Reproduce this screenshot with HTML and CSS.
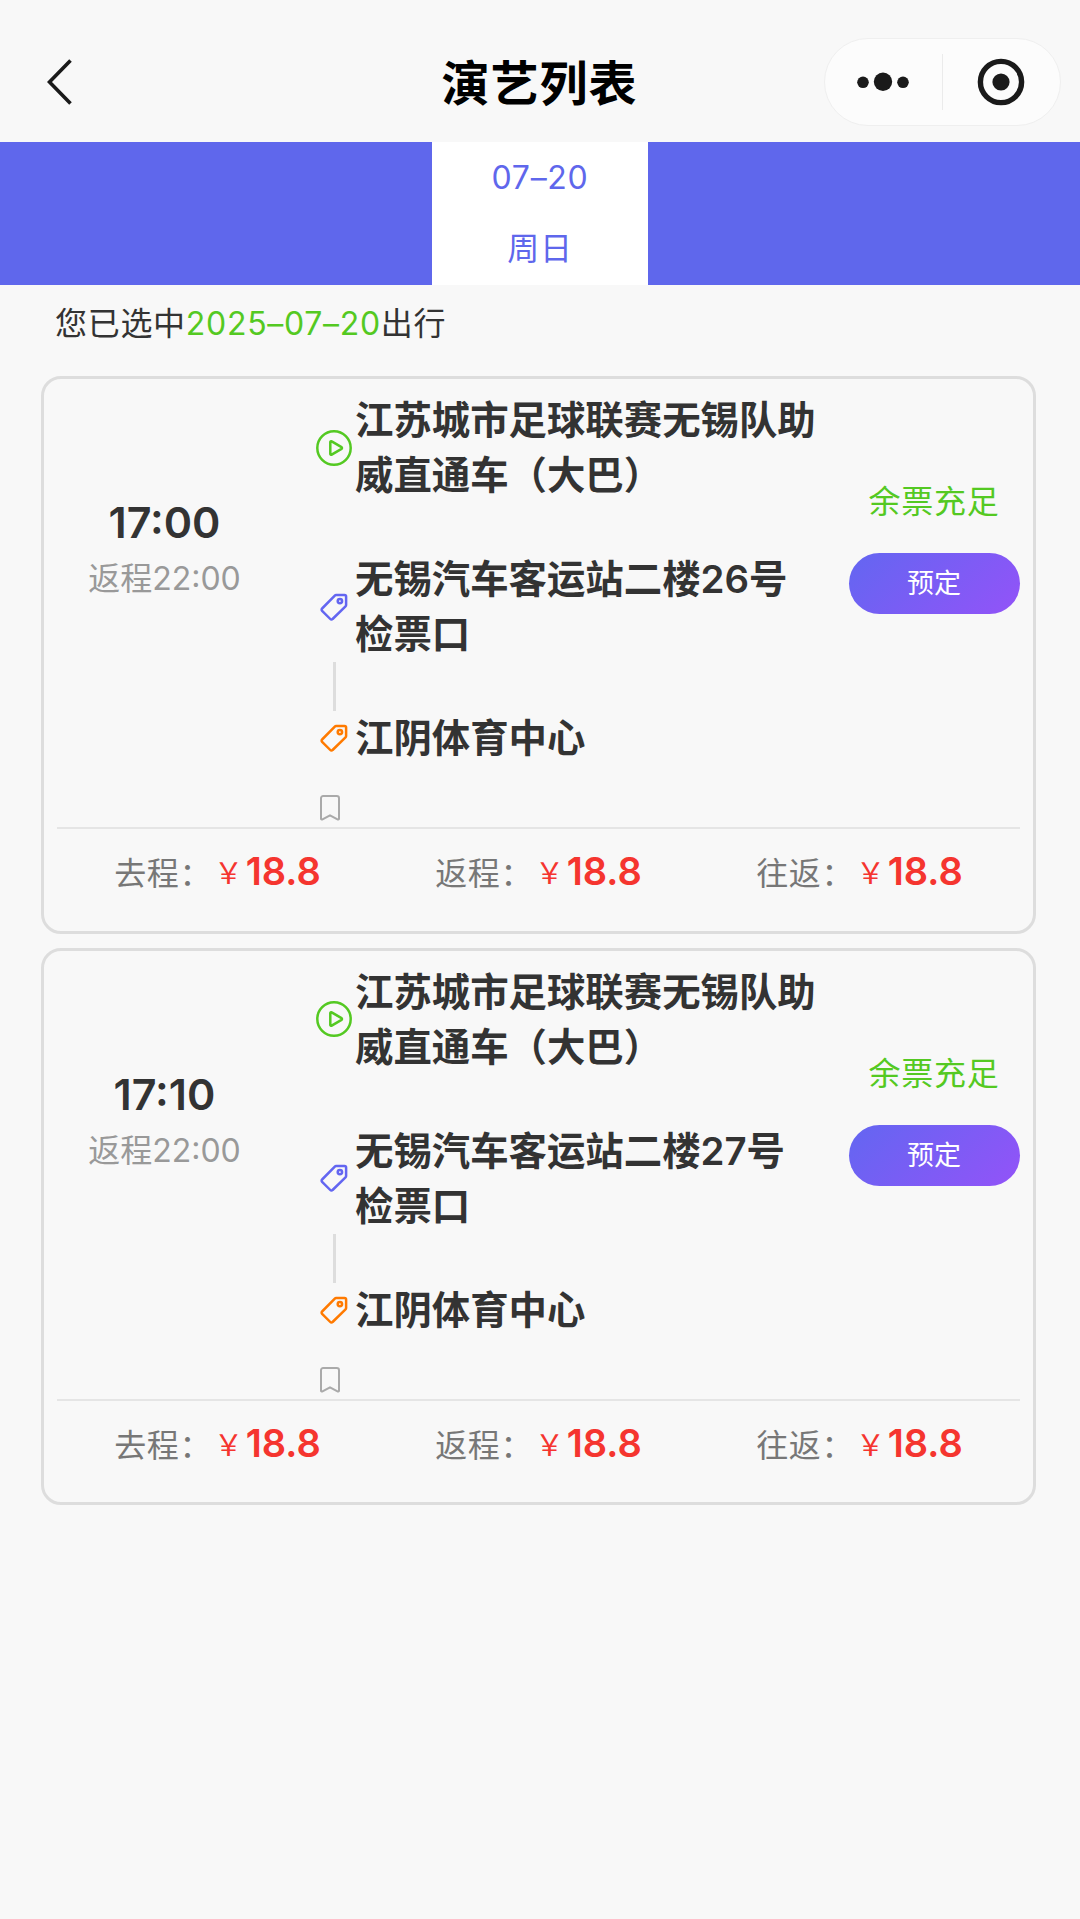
FILE: index.html
```html
<!DOCTYPE html>
<html lang="zh-CN">
<head>
    <meta charset="UTF-8">
    <meta name="viewport" content="width=device-width, initial-scale=1.0">
    <title>演艺列表</title>
    <link rel="stylesheet" href="styles.css">
</head>
<body>

<svg class="sprite">
    <symbol id="icon-play" viewBox="0 0 36 36">
        <circle cx="18" cy="18" r="16.7"/>
        <path d="M14.3 12.2v11.6a.9.9 0 0 0 1.4.8l9.8-5.8a.9.9 0 0 0 0-1.6l-9.8-5.8a.9.9 0 0 0-1.4.8z"/>
    </symbol>
    <symbol id="icon-tag" viewBox="0 0 36 36">
        <path d="M20.2 6h8.3a1.6 1.6 0 0 1 1.6 1.6v8.3a2 2 0 0 1-.6 1.4L16.6 30a1.6 1.6 0 0 1-2.3 0l-8.2-8.2a1.6 1.6 0 0 1 0-2.3L18.8 6.6a2 2 0 0 1 1.4-.6z"/>
        <circle cx="23.9" cy="12.1" r="2.2"/>
    </symbol>
    <symbol id="icon-bookmark" viewBox="0 0 20 26">
        <path d="M3.2 1h13.6a2.2 2.2 0 0 1 2.2 2.2v20.3a1 1 0 0 1-1.5.9L10 20.3l-7.5 4.1a1 1 0 0 1-1.5-.9V3.2A2.2 2.2 0 0 1 3.2 1z"/>
    </symbol>
</svg>

<header class="navbar">
    <svg class="back" viewBox="0 0 25 46"><path d="M23.5 1.5L2.5 23l21 21.5"/></svg>
    <h1>演艺列表</h1>
    <div class="capsule">
        <svg class="dots" viewBox="0 0 52 20">
            <circle cx="6" cy="10.3" r="5.8"/>
            <circle cx="26" cy="9.8" r="9.2"/>
            <circle cx="46" cy="10.3" r="5.8"/>
        </svg>
        <span class="split"></span>
        <svg class="ring" viewBox="0 0 48 48">
            <circle class="ring-line" cx="24" cy="24" r="20.6"/>
            <circle cx="24" cy="24" r="8.6"/>
        </svg>
    </div>
</header>

<nav class="dates">
    <div class="date active">
        <span>07–20</span>
        <span>周日</span>
    </div>
</nav>

<p class="selected">您已选中<span>2025–07–20</span>出行</p>

<main class="list">
    <section class="card">
        <div class="info">
            <div class="time">
                <strong>17:00</strong>
                <span>返程22:00</span>
            </div>
            <div class="route">
                <div class="stop">
                    <svg class="icon green"><use href="#icon-play"/></svg>
                    <p>江苏城市足球联赛无锡队助威直通车（大巴）</p>
                </div>
                <div class="stop start">
                    <svg class="icon blue"><use href="#icon-tag"/></svg>
                    <p>无锡汽车客运站二楼26号检票口</p>
                </div>
                <div class="line"></div>
                <div class="stop">
                    <svg class="icon orange"><use href="#icon-tag"/></svg>
                    <p>江阴体育中心</p>
                </div>
                <svg class="bookmark"><use href="#icon-bookmark"/></svg>
            </div>
            <div class="action">
                <span class="stock">余票充足</span>
                <button>预定</button>
            </div>
        </div>
        <div class="prices">
            <div class="price">去程：<i>￥</i><b>18.8</b></div>
            <div class="price">返程：<i>￥</i><b>18.8</b></div>
            <div class="price">往返：<i>￥</i><b>18.8</b></div>
        </div>
    </section>

    <section class="card">
        <div class="info">
            <div class="time">
                <strong>17:10</strong>
                <span>返程22:00</span>
            </div>
            <div class="route">
                <div class="stop">
                    <svg class="icon green"><use href="#icon-play"/></svg>
                    <p>江苏城市足球联赛无锡队助威直通车（大巴）</p>
                </div>
                <div class="stop start">
                    <svg class="icon blue"><use href="#icon-tag"/></svg>
                    <p>无锡汽车客运站二楼27号检票口</p>
                </div>
                <div class="line"></div>
                <div class="stop">
                    <svg class="icon orange"><use href="#icon-tag"/></svg>
                    <p>江阴体育中心</p>
                </div>
                <svg class="bookmark"><use href="#icon-bookmark"/></svg>
            </div>
            <div class="action">
                <span class="stock">余票充足</span>
                <button>预定</button>
            </div>
        </div>
        <div class="prices">
            <div class="price">去程：<i>￥</i><b>18.8</b></div>
            <div class="price">返程：<i>￥</i><b>18.8</b></div>
            <div class="price">往返：<i>￥</i><b>18.8</b></div>
        </div>
    </section>
</main>

</body>
</html>
```
FILE: styles.css
```css
* {
    box-sizing: border-box;
    margin: 0;
    padding: 0;
}
body {
    min-height: 100vh;
    background: #f8f8f8;
    color: #333;
    font-family: Inter, "Noto Sans CJK SC", sans-serif;
    font-size: 32px;
}
svg {
    display: block;
    fill: none;
}
.sprite {
    display: none;
}

/* top bar */
.navbar {
    display: grid;
    grid-template-columns: 1fr auto 1fr;
    align-items: center;
    height: 142px;
    padding: 22px 19px 0 47px;
}
.back {
    width: 25px;
    height: 46px;
    stroke: #1a1a1a;
    stroke-width: 3.6;
}
.navbar h1 {
    margin-left: -29px;
    padding-bottom: 5px;
    color: #000;
    font-size: 48px;
    font-weight: 600;
    letter-spacing: 1px;
}
.capsule {
    display: flex;
    align-items: center;
    justify-self: end;
    width: 237px;
    height: 88px;
    padding: 0 32px 1px;
    border: 1px solid #efefef;
    border-radius: 44px;
    background: #fcfcfc;
}
.dots {
    width: 52px;
    height: 20px;
    fill: #1a1a1a;
}
.split {
    width: 1px;
    height: 56px;
    margin: 0 34px 0 33px;
    background: #ebebeb;
}
.ring {
    flex: none;
    width: 48px;
    height: 48px;
    fill: #1a1a1a;
}
.ring-line {
    fill: none;
    stroke: #1a1a1a;
    stroke-width: 5.4;
}

/* date tabs */
.dates {
    display: flex;
    justify-content: center;
    height: 143px;
    background: #5f67ec;
}
.date {
    display: flex;
    flex-direction: column;
    width: 216px;
    line-height: 71px;
    letter-spacing: 0.7px;
    text-align: center;
}
.date.active {
    background: #fff;
    color: #5f67ec;
}
.selected {
    height: 91px;
    padding: 3px 0 0 55px;
    letter-spacing: 0.7px;
    line-height: 71px;
}
.selected span {
    color: #54c922;
}

/* cards */
.list {
    display: flex;
    flex-direction: column;
    gap: 14px;
    padding: 0 44px 0 41px;
}
.card {
    height: 557.5px;
    padding: 14px 13px 0 13px;
    border: 3px solid #ddd;
    border-radius: 20px;
}
.info {
    display: flex;
    height: 436px;
    border-bottom: 2px solid #e5e5e5;
}
.time {
    width: 215px;
    padding: 101px 0 0;
    text-align: center;
}
.time strong {
    display: block;
    font-size: 43px;
    font-weight: 600;
    line-height: 57px;
}
.time span {
    display: block;
    color: #999;
    line-height: 56px;
}
.route {
    width: 552px;
    padding-left: 44px;
}
.stop {
    display: flex;
    align-items: center;
}
.stop p {
    width: 464px;
    margin-left: 3px;
    font-size: 38.4px;
    font-weight: 600;
    line-height: 55px;
}
.start {
    margin-top: 49px;
}
.icon {
    width: 36px;
    height: 36px;
    margin-top: -1px;
    stroke-width: 2.5;
}
.green {
    stroke: #54c922;
}
.blue {
    stroke: #6366f1;
}
.orange {
    stroke: #ff7a00;
}
.line {
    width: 3px;
    height: 49px;
    margin-left: 17px;
    background: #ddd;
}
.bookmark {
    width: 20px;
    height: 26px;
    margin: 29px 0 0 4px;
    stroke: #aaa;
    stroke-width: 2;
}
.action {
    display: flex;
    flex-direction: column;
    align-items: center;
    flex: 1;
    padding: 85px 0 0 24px;
}
.stock {
    color: #54c922;
    letter-spacing: 0.8px;
    line-height: 48px;
    white-space: nowrap;
}
button {
    width: 171px;
    height: 61px;
    margin-top: 27px;
    padding-bottom: 4px;
    border: none;
    border-radius: 31px;
    background: linear-gradient(135deg, #6366f1, #9353f8);
    color: #fff;
    font-family: inherit;
    font-size: 27px;
}
.prices {
    display: grid;
    grid-template-columns: repeat(3, 1fr);
    height: 84px;
}
.price {
    display: flex;
    align-items: center;
    justify-content: center;
    color: #777;
    letter-spacing: 0.6px;
}
.price i {
    margin-left: 2px;
    color: #f5352f;
    font-size: 29px;
    font-style: normal;
}
.price b {
    margin-left: 2px;
    color: #f5352f;
    font-size: 38px;
    font-weight: 600;
    letter-spacing: 0;
}
```
